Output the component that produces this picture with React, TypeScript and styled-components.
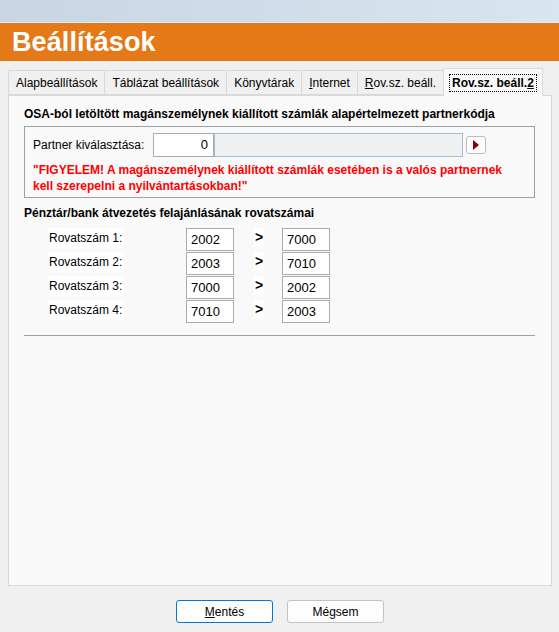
import React, { useState } from 'react';
import styled, { createGlobalStyle } from 'styled-components';

const GlobalStyle = createGlobalStyle`
    html, body {
        margin: 0;
        padding: 0;
        background: #f0f0f0;
    }
    body {
        font-family: "Liberation Sans", Arial, sans-serif;
        font-size: 12px;
        color: #000;
    }
`;

const Window = styled.div`
    width: 559px;
    height: 632px;
    display: flex;
    flex-direction: column;
    background: #f0f0f0;
    overflow: hidden;
`;

const TopStrip = styled.div`
    height: 22px;
    background: linear-gradient(to right, #c8d5e2, #d9e5f1);
    border-bottom: 1px solid #e4ecf4;
`;

const TitleBar = styled.div`
    height: 38px;
    background: #e57817;
    display: flex;
    align-items: center;
    padding-left: 12px;
`;

const Title = styled.h1`
    margin: 0;
    color: #fff;
    font-size: 27px;
    font-weight: bold;
    letter-spacing: 0.1px;
`;

const TabRow = styled.div`
    display: flex;
    align-items: flex-end;
    padding: 0 8px;
    margin-top: 7px;
    position: relative;
    z-index: 1;
`;

const Tab = styled.div<{ $active?: boolean }>`
    height: ${(p) => (p.$active ? '28px' : '25px')};
    margin-bottom: ${(p) => (p.$active ? '-1px' : '0')};
    box-sizing: border-box;
    padding: 0 ${(p) => (p.$active ? '6px' : '7px')};
    display: flex;
    align-items: center;
    border: 1px solid #d9d9d9;
    border-bottom: ${(p) => (p.$active ? 'none' : '1px solid #d9d9d9')};
    margin-left: -1px;
    background: ${(p) => (p.$active ? '#f9f9f9' : '#f0f0f0')};
    font-weight: ${(p) => (p.$active ? 'bold' : 'normal')};
    color: #000;
    white-space: nowrap;
    cursor: default;

    &:first-child {
        margin-left: 0;
    }
`;

const FocusLabel = styled.span`
    outline: 1px dotted #000;
    outline-offset: 0;
    padding: 1px 2px;
`;

const Key = styled.span`
    text-decoration: underline;
`;

const Panel = styled.div`
    margin: 0 7px 0 8px;
    height: 491px;
    box-sizing: border-box;
    background: #f9f9f9;
    border: 1px solid #d9d9d9;
    padding: 11px 16px 0 15px;
    display: flex;
    flex-direction: column;
`;

const SectionTitle = styled.div`
    font-weight: bold;
    line-height: 15px;
    margin-bottom: 4px;
`;

const GroupBox = styled.div`
    border: 1px solid #a0a0a0;
    height: 72px;
    box-sizing: border-box;
    padding: 6px 8px 0 8px;
    margin-bottom: 8px;
`;

const PartnerRow = styled.div`
    display: flex;
    align-items: center;
`;

const PartnerLabel = styled.span`
    width: 120px;
`;

const CodeInput = styled.div`
    width: 61px;
    height: 24px;
    box-sizing: border-box;
    border: 1px solid #ababab;
    background: #fff;
    text-align: right;
    padding-right: 5px;
    line-height: 22px;
    font-size: 13px;
`;

const NameInput = styled.div`
    width: 249px;
    height: 24px;
    box-sizing: border-box;
    border: 1px solid #a3bcd6;
    background: #f0f0f0;
`;

const ArrowButton = styled.button`
    width: 20px;
    height: 18px;
    margin-left: 3px;
    padding: 0;
    border: 1px solid #bdbdbd;
    border-radius: 3px;
    background: #fdfdfd;
    display: flex;
    align-items: center;
    justify-content: center;
`;

const Warning = styled.div`
    color: #ff0000;
    font-weight: bold;
    line-height: 16px;
    margin-top: 5px;
`;

const RovatGrid = styled.div`
    display: grid;
    grid-template-columns: 137px 48px 48px 48px;
    grid-auto-rows: 23px;
    row-gap: 1px;
    margin-top: 3px;
    padding-left: 25px;
`;

const RowLabel = styled.span`
    align-self: start;
    justify-self: start;
    background: #fff;
    line-height: 20px;
    padding-right: 2px;
`;

const NumInput = styled.div`
    border: 1px solid #ababab;
    background: #fff;
    box-sizing: border-box;
    padding-left: 4px;
    line-height: 22px;
    font-size: 13px;
`;

const Arrow = styled.span`
    justify-self: start;
    align-self: start;
    margin-left: 20px;
    background: #fff;
    font-weight: bold;
    font-size: 14px;
    line-height: 18px;
    padding: 0 1px;
`;

const Divider = styled.hr`
    margin: 12px 0 0 0;
    border: none;
    border-top: 1px solid #a0a0a0;
    height: 0;
`;

const ButtonBar = styled.div`
    flex: 1;
    display: flex;
    justify-content: center;
    align-items: flex-start;
    gap: 14px;
    padding-top: 14px;
    padding-left: 1px;
`;

const ActionButton = styled.button<{ $primary?: boolean }>`
    width: 97px;
    height: 23px;
    box-sizing: border-box;
    border: 1px solid ${(p) => (p.$primary ? '#0078d7' : '#c2c2c2')};
    border-radius: 3px;
    background: #fdfdfd;
    font-family: "Liberation Sans", Arial, sans-serif;
    font-size: 12px;
    color: #000;
    padding: 0;
`;

const tabs = ['Alapbeállítások', 'Táblázat beállítások', 'Könyvtárak', 'Internet', 'Rov.sz. beáll.', 'Rov.sz. beáll.2'];

const rovatok = [
    { label: 'Rovatszám 1:', from: '2002', to: '7000' },
    { label: 'Rovatszám 2:', from: '2003', to: '7010' },
    { label: 'Rovatszám 3:', from: '7000', to: '2002' },
    { label: 'Rovatszám 4:', from: '7010', to: '2003' },
];

const renderTabLabel = (name: string) => {
    if (name === 'Internet') {
        return (
            <>
                <Key>I</Key>nternet
            </>
        );
    }
    if (name === 'Rov.sz. beáll.') {
        return (
            <>
                <Key>R</Key>ov.sz. beáll.
            </>
        );
    }
    if (name === 'Rov.sz. beáll.2') {
        return (
            <FocusLabel>
                Rov.sz. beáll.<Key>2</Key>
            </FocusLabel>
        );
    }
    return name;
};

export default function App() {
    const [activeTab, setActiveTab] = useState<string>('Rov.sz. beáll.2');

    return (
        <Window>
            <GlobalStyle />
            <TopStrip />
            <TitleBar>
                <Title>Beállítások</Title>
            </TitleBar>
            <TabRow>
                {tabs.map((t) => (
                    <Tab key={t} $active={t === activeTab} onClick={() => setActiveTab(t)}>
                        {renderTabLabel(t)}
                    </Tab>
                ))}
            </TabRow>
            <Panel>
                <SectionTitle>OSA-ból letöltött magánszemélynek kiállított számlák alapértelmezett partnerkódja</SectionTitle>
                <GroupBox>
                    <PartnerRow>
                        <PartnerLabel>Partner kiválasztása:</PartnerLabel>
                        <CodeInput>0</CodeInput>
                        <NameInput />
                        <ArrowButton>
                            <svg width="6" height="10" viewBox="0 0 6 10">
                                <path d="M0 0 L6 5 L0 10 Z" fill="#8b0000" />
                            </svg>
                        </ArrowButton>
                    </PartnerRow>
                    <Warning>
                        "FIGYELEM! A magánszemélynek kiállított számlák esetében is a valós partnernek
                        <br />
                        kell szerepelni a nyilvántartásokban!"
                    </Warning>
                </GroupBox>
                <SectionTitle>Pénztár/bank átvezetés felajánlásának rovatszámai</SectionTitle>
                <RovatGrid>
                    {rovatok.map((r) => (
                        <React.Fragment key={r.label}>
                            <RowLabel>{r.label}</RowLabel>
                            <NumInput>{r.from}</NumInput>
                            <Arrow>&gt;</Arrow>
                            <NumInput>{r.to}</NumInput>
                        </React.Fragment>
                    ))}
                </RovatGrid>
                <Divider />
            </Panel>
            <ButtonBar>
                <ActionButton $primary>
                    <Key>M</Key>entés
                </ActionButton>
                <ActionButton>
                    Mé<Key>g</Key>sem
                </ActionButton>
            </ButtonBar>
        </Window>
    );
}
